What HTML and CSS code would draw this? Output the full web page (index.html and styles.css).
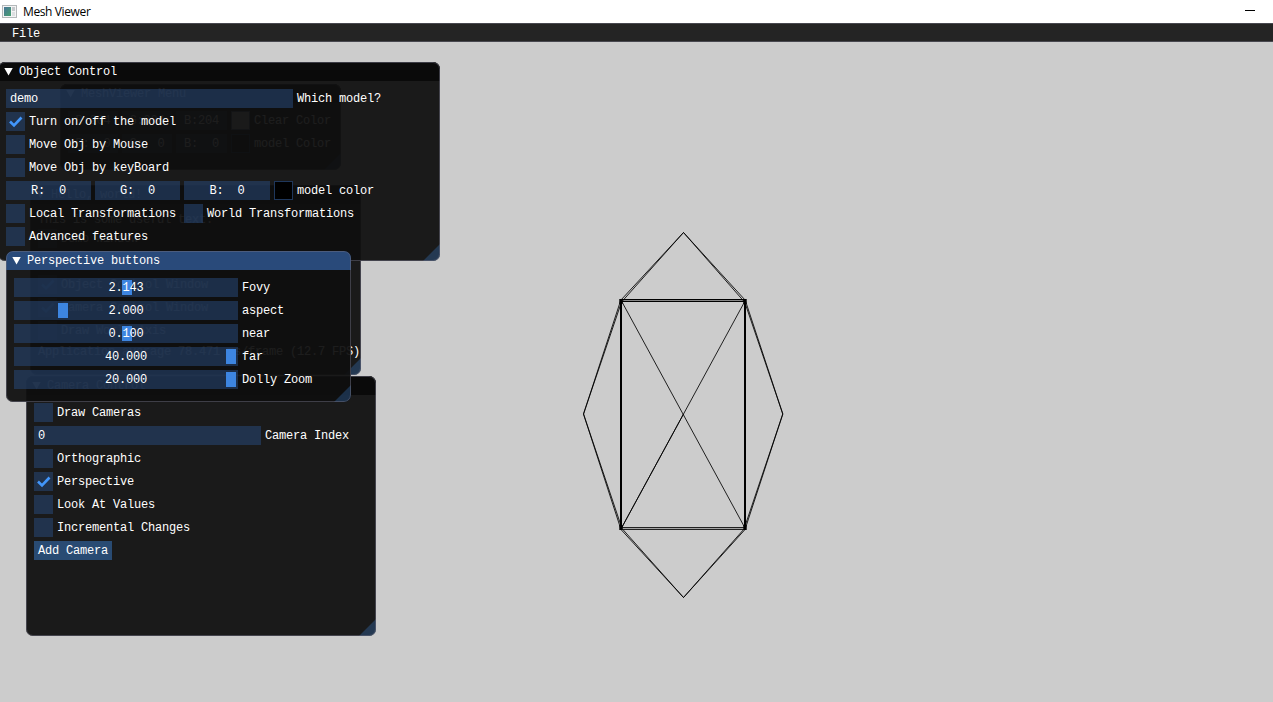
FILE: index.html
```html
<!DOCTYPE html>
<html lang="en">
<head>
<meta charset="utf-8">
<title>Mesh Viewer</title>
<link rel="stylesheet" href="styles.css">
</head>
<body>
<header class="titlebar">
  <svg class="app-icon" width="15" height="13" viewBox="0 0 15 13"><defs><linearGradient id="pane" x1="0" y1="0" x2="1" y2="1"><stop offset="0" stop-color="#4a7597"/><stop offset="1" stop-color="#45a070"/></linearGradient></defs><rect x=".5" y=".5" width="14" height="12" fill="#f4f4f4" stroke="#b4b8ba"/><rect x="2" y="2" width="7" height="9" fill="url(#pane)"/><rect x="10" y="2" width="3" height="4" fill="#c5c9cc"/><rect x="10" y="7" width="3" height="4" fill="#dcdfe1"/></svg>
  <span class="app-title">Mesh Viewer</span>
  <span class="minimize"></span>
</header>
<nav class="menubar"><span>File</span></nav>
<main class="viewport">
  <svg class="mesh" width="1273" height="660" viewBox="0 42 1273 660" fill="none" stroke="#000">
    <g stroke-width=".85">
      <path d="M620.5 300.5L683.5 232.5L745.5 300.5M622 301.5L683.5 232.5L744.5 302"/>
      <path d="M620.5 529L683.5 597.5L745.5 529M622 528.5L683.5 597.5L744.5 528.5"/>
      <path d="M620.5 301L583.5 414L620.5 528M621.5 302L583.5 414L621.5 527"/>
      <path d="M745.5 301L782.8 414L745.5 528M744.7 302L782.8 414L744.7 527"/>
      <path d="M621.5 301L745 528M745 301L621.5 528M683.5 414L621.5 528"/>
    </g>
    <path d="M621 299.5H745M621 301.5H745"/>
    <path d="M621 300.5H745" stroke-opacity=".35"/>
    <path d="M621 527.5H745M621 529.5H745" stroke="#222"/>
    <path d="M621 528.5H745" stroke-opacity=".2"/>
    <path d="M621 299V530M745 299V530" stroke-width="2"/>
    <path d="M621 299V304M745 299V304M621 525V530M745 525V530" stroke-width="3.4"/>
  </svg>

  <section class="window viewer-menu">
    <h2 class="title"><i class="arrow"></i>MeshViewer Menu</h2>
    <div class="body">
      <div class="row"><span class="frame channel">R:204</span><span class="frame channel">G:204</span><span class="frame channel last">B:204</span><span class="swatch light"></span><span>Clear Color</span></div>
      <div class="row"><span class="frame channel">R:  0</span><span class="frame channel">G:  0</span><span class="frame channel last">B:  0</span><span class="swatch"></span><span>model Color</span></div>
    </div>
    <i class="grip"></i>
  </section>

  <section class="window hello">
    <h2 class="title"><i class="arrow"></i>Hello, world!</h2>
    <div class="body">
      <p class="text">This is some useful text.</p>
      <div class="row"><i class="check"></i><span>Demo Window</span></div>
      <div class="row"></div>
      <div class="row"><i class="check"><svg viewBox="0 0 19 19"><path d="M4 9.5L8 13.5L15.5 5.5"/></svg></i><span>Object Control Window</span></div>
      <div class="row"><i class="check"><svg viewBox="0 0 19 19"><path d="M4 9.5L8 13.5L15.5 5.5"/></svg></i><span>Camera Control Window</span></div>
      <div class="row"><i class="check"></i><span>Draw World Axis</span></div>
      <p class="text">Application average 78.471 ms/frame (12.7 FPS)</p>
    </div>
    <i class="grip"></i>
  </section>

  <section class="window camera">
    <h2 class="title"><i class="arrow"></i>Camera Control</h2>
    <div class="body">
      <div class="row"><i class="check"></i><span>Draw Cameras</span></div>
      <div class="row"><span class="frame field">0</span><span>Camera Index</span></div>
      <div class="row"><i class="check"></i><span>Orthographic</span></div>
      <div class="row"><i class="check"><svg viewBox="0 0 19 19"><path d="M4 9.5L8 13.5L15.5 5.5"/></svg></i><span>Perspective</span></div>
      <div class="row"><i class="check"></i><span>Look At Values</span></div>
      <div class="row"><i class="check"></i><span>Incremental Changes</span></div>
      <div class="row"><span class="button">Add Camera</span></div>
    </div>
    <i class="grip"></i>
  </section>

  <section class="window object">
    <h2 class="title"><i class="arrow"></i>Object Control</h2>
    <div class="body">
      <div class="row"><span class="frame field">demo</span><span>Which model?</span></div>
      <div class="row"><i class="check"><svg viewBox="0 0 19 19"><path d="M4 9.5L8 13.5L15.5 5.5"/></svg></i><span>Turn on/off the model</span></div>
      <div class="row"><i class="check"></i><span>Move Obj by Mouse</span></div>
      <div class="row"><i class="check"></i><span>Move Obj by keyBoard</span></div>
      <div class="row"><span class="frame channel">R:  0</span><span class="frame channel">G:  0</span><span class="frame channel last">B:  0</span><span class="swatch"></span><span>model color</span></div>
      <div class="row"><i class="check"></i><span class="spaced">Local Transformations</span><i class="check"></i><span>World Transformations</span></div>
      <div class="row"><i class="check"></i><span>Advanced features</span></div>
    </div>
    <i class="grip"></i>
  </section>

  <section class="window perspective">
    <h2 class="title active"><i class="arrow"></i>Perspective buttons</h2>
    <div class="body">
      <div class="row"><span class="frame slider"><i class="grab" style="left:108px"></i><b>2.143</b></span><span>Fovy</span></div>
      <div class="row"><span class="frame slider"><i class="grab" style="left:44px"></i><b>2.000</b></span><span>aspect</span></div>
      <div class="row"><span class="frame slider"><i class="grab" style="left:108px"></i><b>0.100</b></span><span>near</span></div>
      <div class="row"><span class="frame slider"><i class="grab" style="left:212px"></i><b>40.000</b></span><span>far</span></div>
      <div class="row"><span class="frame slider"><i class="grab" style="left:212px"></i><b>20.000</b></span><span>Dolly Zoom</span></div>
    </div>
    <i class="grip"></i>
  </section>
</main>
</body>
</html>
```
FILE: styles.css
```css
* { box-sizing: border-box; }
body {
  margin: 0;
  width: 1273px;
  height: 702px;
  overflow: hidden;
  background: #ccc;
  color: #fff;
  font: 12px/15px "Liberation Mono", monospace;
  letter-spacing: -0.2px;
  display: flex;
  flex-direction: column;
}
.titlebar {
  height: 23px;
  flex: none;
  display: flex;
  align-items: center;
  padding-left: 2px;
  background: #fff;
  color: #000;
  font: 12px/16px "Open Sans", sans-serif;
  letter-spacing: -0.38px;
}
.app-icon { margin-right: 6px; margin-top: -1px; }
.app-title { padding-top: 1px; }
.minimize { width: 10px; height: 1px; background: #000; margin: -2px 18px 0 auto; }
.menubar {
  height: 19px;
  flex: none;
  padding: 2px 12px;
  line-height: 17px;
  background: #242424;
  border: solid #48484f;
  border-width: 1px 0;
}
.viewport { position: relative; flex: 1; }
.mesh { display: block; }

.window {
  position: absolute;
  overflow: hidden;
  border-radius: 7px;
  background: rgba(15, 15, 15, .94);
}
.window::after {
  content: "";
  position: absolute;
  inset: 0;
  border: 1px solid rgba(110, 110, 128, .5);
  border-radius: 7px;
}
.viewer-menu { left: 60px; top: 42px; width: 281px; height: 86px; }
.hello { left: 30px; top: 143px; width: 331px; height: 190px; }
.camera { left: 26px; top: 334px; width: 350px; height: 260px; }
.object { left: -2px; top: 20px; width: 442px; height: 199px; }
.perspective { left: 6px; top: 209px; width: 345px; height: 151px; }

.title {
  display: flex;
  align-items: center;
  height: 19px;
  margin: 0;
  padding-left: 6px;
  gap: 6px;
  background: #0a0a0a;
  font: inherit;
  line-height: 21px;
  white-space: pre;
}
.active { background: #294a7a; }
.arrow {
  width: 9px;
  height: 8px;
  background: #fff;
  clip-path: polygon(0 0, 100% 0, 50% 100%);
}
.title .arrow { margin-bottom: 1px; }
.title { padding-top: 1px; }
.body { padding: 8px; display: flex; flex-direction: column; gap: 4px; }
.row { display: flex; align-items: center; gap: 4px; height: 19px; }
.row span, .text { white-space: pre; line-height: 21px; }
.text { margin: 0; height: 13px; line-height: 16px; }
.row span { height: 19px; }
.frame, .check { background: rgba(41, 74, 122, .54); height: 19px; flex: none; }
.check { width: 19px; }
.check svg { display: block; width: 19px; height: 19px; fill: none; stroke: #4296fa; stroke-width: 2.6; }
.channel { width: 50px; text-align: center; }
.viewer-menu .last { width: 51px; }
.object .channel { width: 85px; }
.object .last { width: 86px; }
.field { padding-left: 4px; width: 287px; }
.camera .field { width: 227px; }
.swatch { width: 19px; height: 19px; flex: none; background: #000; border: 1px solid rgba(41, 74, 122, .75); }
.light { background: #ccc; }
.spaced { margin-right: 4px; }
.button {
  width: 78px;
  height: 19px;
  padding-left: 4px;
  background: rgba(66, 150, 250, .4);
}
.slider { position: relative; width: 224px; text-align: center; }
.slider b { position: relative; font-weight: normal; }
.grab { position: absolute; top: 2px; width: 10px; height: 15px; background: #3d85e0; }
.grip {
  position: absolute;
  right: 0;
  bottom: 0;
  width: 17px;
  height: 17px;
  background: rgba(66, 150, 250, .25);
  clip-path: polygon(100% 0, 100% 100%, 0 100%);
}
```
